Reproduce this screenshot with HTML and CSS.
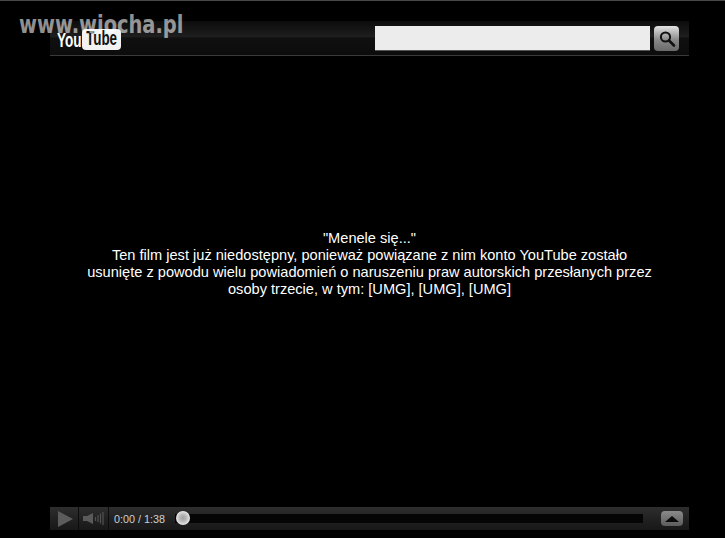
FILE: index.html
```html
<!DOCTYPE html>
<html>
<head>
    <title>YouTube</title>
    <meta charset="UTF-8">
    <link rel="stylesheet" href="styles.css">
</head>
<body>

<div class="watermark">www.wiocha.pl</div>

<div class="player">
    <div class="top-bar">
        <div class="logo">
            <span class="logo-you">You</span>
            <span class="logo-tube"><span class="logo-tube-text">Tube</span></span>
        </div>
        <input type="text" class="search-input">
        <button class="search-button">
            <svg width="18" height="18" viewBox="0 0 18 18">
                <circle cx="7.5" cy="7" r="4.6" fill="none" stroke="#111" stroke-width="2"/>
                <path d="M11 10.5 L16 15.5" stroke="#111" stroke-width="2.6" stroke-linecap="round"/>
            </svg>
        </button>
    </div>

    <div class="screen">
        <p class="message">"Menele się..."<br>Ten film jest już niedostępny, ponieważ powiązane z nim konto YouTube zostało<br>usunięte z powodu wielu powiadomień o naruszeniu praw autorskich przesłanych przez<br>osoby trzecie, w tym: [UMG], [UMG], [UMG]</p>
    </div>

    <div class="controls">
        <div class="ctrl-play">
            <svg width="15" height="16" viewBox="0 0 15 16"><path d="M0 0 L15 8 L0 16 Z" fill="#5c5c5c"/></svg>
        </div>
        <div class="ctrl-volume">
            <svg width="21" height="15" viewBox="0 0 21 15">
                <path d="M0 5 H4 L10 2 V13 L4 10 H0 Z" fill="#5a5a5a"/>
                <path d="M12.500 6 V10 M15 4 V11 M17.500 2.500 V12.500 M20 1 V14" stroke="#525252" stroke-width="1.200"/>
            </svg>
        </div>
        <div class="ctrl-time">0:00 / 1:38</div>
        <div class="ctrl-track">
            <span class="ctrl-knob"></span>
            <span class="ctrl-rail"></span>
        </div>
        <button class="ctrl-expand"><span class="ctrl-arrow"></span></button>
    </div>
</div>

</body>
</html>
```
FILE: styles.css
```css
/* Global styles */
body {
    background-color: #000000;
    color: #ffffff;
    font-family: "Liberation Sans", Arial, sans-serif;
    margin: 0;
    padding: 0;
    height: 538px;
    overflow: hidden;
    box-sizing: border-box;
    border-top: 1px solid #484848;
    position: relative;
}

/* Site watermark on top of the picture */
.watermark {
    position: absolute;
    left: 19px;
    top: 10px;
    z-index: 2;
    font-family: "DejaVu Sans", sans-serif;
    font-weight: bold;
    font-size: 24px;
    line-height: 28px;
    color: rgba(255, 255, 255, 0.58);
    transform: scaleX(0.81);
    transform-origin: left center;
}

.player {
    width: 639px;
    height: 529px;
    margin-left: 50px;
    padding-top: 20px;
    box-sizing: border-box;
    display: flex;
    flex-direction: column;
}

/* Top bar */
.top-bar {
    height: 35px;
    box-sizing: border-box;
    padding-left: 7px;
    padding-right: 10px;
    display: flex;
    align-items: center;
    background: linear-gradient(to bottom, #0c0c0c 0%, #1e1e1e 46%, #101010 50%, #0c0c0c 100%);
    border-bottom: 1px solid #3a3a3a;
}

.logo {
    display: flex;
    align-items: center;
    width: 318px;
    margin-top: 3px;
}

.logo-you {
    font-weight: bold;
    font-size: 20px;
    line-height: 20px;
    width: 25px;
    color: #ffffff;
    display: block;
    transform: scaleX(0.68);
    transform-origin: left center;
}

.logo-tube {
    width: 39px;
    height: 21px;
    background-color: #f2f2f2;
    border-radius: 4px;
    color: #111111;
    font-weight: bold;
    font-size: 20px;
    line-height: 20px;
    display: flex;
    align-items: center;
}

.logo-tube-text {
    display: block;
    width: 32px;
    flex: none;
    margin-left: 4px;
    margin-top: -3px;
    transform: scaleX(0.67);
    transform-origin: left center;
}

.search-input {
    width: 275px;
    height: 25px;
    box-sizing: border-box;
    background-color: #ececec;
    border: 0;
    border-bottom: 1px solid #555555;
    padding: 0;
    margin-top: 1px;
}

.search-button {
    width: 25px;
    height: 25px;
    margin-left: 4px;
    margin-top: 1px;
    padding: 0;
    border: 0;
    border-radius: 4px;
    background: linear-gradient(to bottom, #e4e4e4, #8a8a8a 55%, #6a6a6a);
    display: flex;
    align-items: center;
    justify-content: center;
}

/* Message area */
.screen {
    flex: 1;
    padding-top: 174px;
}

.message {
    margin: 0;
    font-size: 14.600px;
    line-height: 17px;
    text-align: center;
    color: #ffffff;
}

/* Bottom controls */
.controls {
    height: 23px;
    display: flex;
    align-items: center;
    background: linear-gradient(to bottom, #2e2e2e, #222222 50%, #181818);
}

.ctrl-play {
    width: 29px;
    height: 23px;
    display: flex;
    align-items: center;
    justify-content: center;
    border-right: 1px solid #0c0c0c;
    box-sizing: border-box;
    padding-left: 3px;
}

.ctrl-volume {
    width: 30px;
    height: 23px;
    display: flex;
    align-items: center;
    justify-content: center;
    border-right: 1px solid #0c0c0c;
    box-sizing: border-box;
}

.ctrl-time {
    width: 63px;
    padding-left: 5px;
    box-sizing: border-box;
    color: #cfcfcf;
    font-size: 10.800px;
}

.ctrl-track {
    flex: 1;
    position: relative;
    height: 23px;
    display: flex;
    align-items: center;
}

.ctrl-rail {
    display: block;
    width: 468px;
    height: 9px;
    margin-left: 3px;
    background-color: #050505;
}

.ctrl-knob {
    position: absolute;
    left: 4px;
    top: 4px;
    width: 14px;
    height: 14px;
    border-radius: 50%;
    background: radial-gradient(circle, #a0a0a0 0%, #b8b8b8 35%, #e8e8e8 70%, #f4f4f4 100%);
}

.ctrl-expand {
    width: 22px;
    height: 15px;
    margin-right: 6px;
    padding: 0;
    border: 0;
    border-radius: 4px;
    background: linear-gradient(to bottom, #8a8a8a, #5c5c5c);
    display: flex;
    align-items: center;
    justify-content: center;
}

.ctrl-arrow {
    width: 0;
    height: 0;
    border-left: 7px solid transparent;
    border-right: 7px solid transparent;
    border-bottom: 6px solid #0a0a0a;
}
```
